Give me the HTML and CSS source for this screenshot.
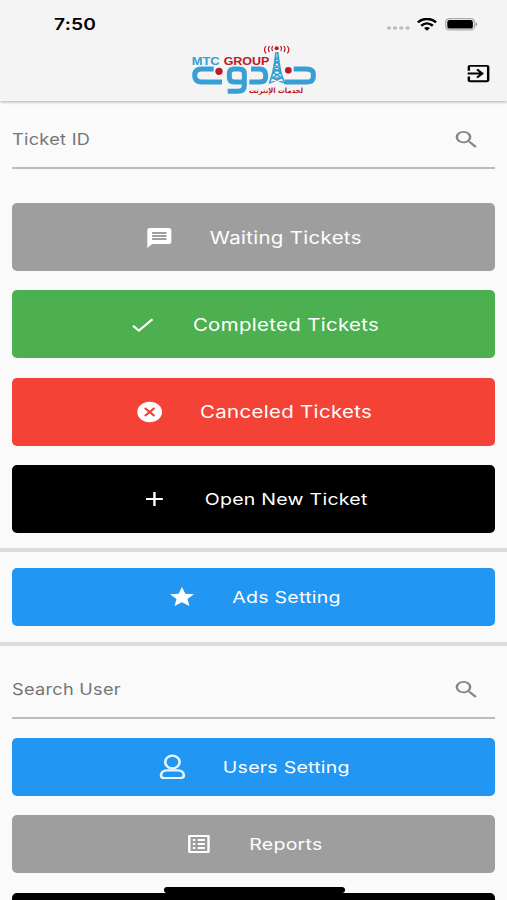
FILE: index.html
```html
<!DOCTYPE html>
<html lang="en">
<head>
<meta charset="utf-8">
<title>MTC Group</title>
<link rel="stylesheet" href="styles.css">
</head>
<body>
<div class="screen">
  <header class="header">
    <div class="status">
      <span class="time">7:50</span>
      <div class="indicators">
        <svg class="signal" width="24" height="6" viewBox="0 0 24 6" fill="#bdbdbd"><ellipse cx="3" cy="3" rx="2.2" ry="1.8"/><ellipse cx="9" cy="3" rx="2.2" ry="1.8"/><ellipse cx="15.3" cy="3" rx="2.2" ry="1.8"/><ellipse cx="21.6" cy="3" rx="2.2" ry="1.8"/></svg>
        <svg class="wifi" width="20" height="13" viewBox="0 0 20 13" fill="none" stroke="#000" stroke-width="2.5"><path d="M.9 4.4C6-.2 14-.2 19.1 4.4"/><path d="M4.2 7.7c3.5-3 8.100-3 11.600 0"/><path d="M7 10c1.800-1.400 4.200-1.400 6 0L10 12.700z" fill="#000" stroke="none"/></svg>
        <svg class="battery" width="33" height="13" viewBox="0 0 33 13"><rect x=".7" y=".7" width="28.800" height="11.200" rx="3.600" fill="#f4f4f4" stroke="#aaa" stroke-width="1.300"/><rect x="2.300" y="2" width="25.600" height="8.600" rx="2.200"/><path d="M30.700 4.300c2 .6 2 3.600 0 4.200z" fill="#999"/></svg>
      </div>
    </div>
    <div class="toolbar">
      <svg class="logo" width="128" height="52" viewBox="30 24 384 156" role="img" aria-label="MTC Group">
        <g fill="none" stroke="#389fd5" stroke-width="15">
          <path d="M101 99H65Q44 99 44 118.500T65 138H126"/>
          <path d="M192 138H162Q148 138 148 124V112Q148 99 162 99H178Q193 99 193 113V148Q193 166 174 166H143"/>
          <path d="M213 99H238Q257 99 257 118V123Q257 138 239 138H208"/>
          <path d="M341 99H379Q400 99 400 114V122Q400 138 379 138H314"/>
        </g>
        <g fill="none" stroke="#389fd5" stroke-width="4">
          <path stroke-width="5" d="M288 48 284 80 278 112 268 143M293 48 297 80 303 112 314 143"/>
          <path d="M286 62 296 74 283 86 299 98 280 110 306 126 272 140M295 62 285 74 298 86 282 98 302 110 276 126 310 140M284 80H298M280 104H302M275 126H307"/>
        </g>
        <g fill="#bd1928"><circle cx="117" cy="106" r="11"/><circle cx="325" cy="103" r="10"/><circle cx="290" cy="37" r="6"/></g>
        <g fill="none" stroke="#bd1928" stroke-width="3.500"><path d="M278 30Q273 38 278 45M268 30Q262 39 268 48M258 30Q249 41 258 52M302 30Q307 38 302 45M312 30Q318 39 312 48M322 30Q331 41 322 52"/></g>
        <text class="logo-name logo-blue" x="35" y="86" textLength="84" lengthAdjust="spacingAndGlyphs">MTC</text>
        <text class="logo-name logo-red" x="131" y="86" textLength="137" lengthAdjust="spacingAndGlyphs">GROUP</text>
        <text class="logo-sub logo-red" x="288" y="170" text-anchor="middle" textLength="162" lengthAdjust="spacingAndGlyphs" direction="rtl">لخدمات الإنترنت</text>
      </svg>
      <svg class="exit" width="29" height="23" viewBox="0 0 24 24" preserveAspectRatio="none"><path d="M10.090 15.590 11.500 17l5-5-5-5-1.410 1.410L12.670 11H3v2h9.670l-2.580 2.590zM19 3H5c-1.110 0-2 .9-2 2v4h2V5h14v14H5v-4H3v4c0 1.100.89 2 2 2h14c1.100 0 2-.9 2-2V5c0-1.100-.9-2-2-2z"/></svg>
    </div>
  </header>

  <main class="content">
    <div class="field">
      <span class="hint">Ticket ID</span>
      <svg class="search" viewBox="0 0 24 24" preserveAspectRatio="none"><path d="M15.500 14h-.79l-.28-.27A6.470 6.470 0 0 0 16 9.500 6.500 6.500 0 1 0 9.500 16c1.610 0 3.090-.59 4.230-1.570l.27.28v.79l5 4.990L20.490 19l-4.990-5zm-6 0a4.500 4.500 0 1 1 0-9 4.500 4.500 0 0 1 0 9z"/></svg>
    </div>

    <section class="group tickets">
      <div class="button gray"><div class="inner large"><svg viewBox="0 0 24 24"><path d="M20 2H4c-1.100 0-1.990.9-1.990 2L2 22l4-4h14c1.100 0 2-.9 2-2V4c0-1.100-.9-2-2-2zm-2 12H6v-2h12v2zm0-3H6V9h12v2zm0-3H6V6h12v2z"/></svg><span>Waiting Tickets</span></div></div>
      <div class="button green"><div class="inner large"><svg viewBox="0 0 24 24"><path d="M9 16.170 4.830 12l-1.420 1.410L9 19 21 7l-1.410-1.410z"/></svg><span>Completed Tickets</span></div></div>
      <div class="button red"><div class="inner large"><svg viewBox="0 0 24 24"><circle cx="12" cy="12" r="10.300"/><path d="M8 8l8 8M16 8l-8 8" stroke="#f44336" stroke-width="1.900"/></svg><span>Canceled Tickets</span></div></div>
      <div class="button black"><div class="inner"><svg viewBox="0 0 24 24"><path d="M19 13h-6v6h-2v-6H5v-2h6V5h2v6h6z"/></svg><span>Open New Ticket</span></div></div>
    </section>

    <section class="group ads">
      <div class="button blue short"><div class="inner"><svg viewBox="0 0 24 24"><path d="M12 17.270 18.180 21l-1.640-7.030L22 9.240l-7.190-.61L12 2 9.190 8.630 2 9.240l5.460 4.730L5.820 21z"/></svg><span>Ads Setting</span></div></div>
    </section>

    <div class="field user-field">
      <span class="hint">Search User</span>
      <svg class="search" viewBox="0 0 24 24" preserveAspectRatio="none"><path d="M15.500 14h-.79l-.28-.27A6.470 6.470 0 0 0 16 9.500 6.500 6.500 0 1 0 9.500 16c1.610 0 3.090-.59 4.230-1.570l.27.28v.79l5 4.990L20.490 19l-4.990-5zm-6 0a4.500 4.500 0 1 1 0-9 4.500 4.500 0 0 1 0 9z"/></svg>
    </div>

    <section class="group users">
      <div class="button blue short"><div class="inner"><svg viewBox="0 0 24 24"><g fill="none" stroke="#e4f7ff" stroke-width="2.200"><ellipse cx="12" cy="7" rx="6" ry="6.300"/><path d="M7.500 15.300h9c3 0 5 2.200 5 5.200q0 2.500-2.500 2.500H5q-2.500 0-2.500-2.500c0-3 2-5.200 5-5.200z"/></g></svg><span>Users Setting</span></div></div>
      <div class="button gray short"><div class="inner"><svg viewBox="0 0 24 24"><path d="M19 5v14H5V5h14m1.100-2H3.900c-.5 0-.9.400-.9.900v16.200c0 .4.400.9.900.9h16.200c.4 0 .9-.5.900-.9V3.900c0-.5-.5-.9-.9-.9zM11 7h6v2h-6V7zm0 4h6v2h-6v-2zm0 4h6v2h-6zM7 7h2v2H7zm0 4h2v2H7zm0 4h2v2H7z"/></svg><span>Reports</span></div></div>
      <div class="button black short"></div>
    </section>
  </main>
  <div class="home-indicator"></div>
</div>
</body>
</html>
```
FILE: styles.css
```css
* { box-sizing: border-box; }
body { margin: 0; background: #fafafa; font-family: Inter, "Liberation Sans", sans-serif; }
svg { display: block; flex: none; }
.screen { position: relative; width: 507px; height: 900px; overflow: hidden; background: #fafafa; }
.header { height: 101px; background: #f4f4f4; box-shadow: 0 1px 3px rgba(0, 0, 0, .3); }
.status { height: 44px; padding: 4px 29px 0 54px; display: flex; justify-content: space-between; align-items: center; }
.time { font-size: 16px; font-weight: 600; transform: scaleX(1.2); transform-origin: left; letter-spacing: .2px; }
.indicators { display: flex; align-items: center; }
.signal { margin: 8px 7px 0 0; }
.wifi { margin-right: 8px; }
.toolbar { height: 52px; display: grid; grid-template-columns: 190px 1fr 29px; padding-right: 14px; }
.logo { grid-column: 2; }
.exit { grid-column: 3; margin-top: 18px; }
.logo-name { font: 700 31px "Liberation Sans", sans-serif; stroke-width: .2px; }
.logo-sub { font: 700 22px "DejaVu Sans", sans-serif; }
.logo-blue { fill: #389fd5; stroke: #389fd5; }
.logo-red { fill: #bd1928; }
.logo-name.logo-red { stroke: #bd1928; }
.content { padding: 9px 12px 0 12.4px; }
.field { height: 59px; border-bottom: 2px solid #bcbcbc; display: flex; align-items: center; justify-content: space-between; padding: 2px 14px 0 0; }
.hint { font-size: 15.500px; color: #757575; letter-spacing: .25px; transform: scaleX(1.17); transform-origin: left; }
.search { width: 29px; height: 23px; fill: #858585; }
.group { display: flex; flex-direction: column; gap: 19.400px; }
.tickets { margin-top: 34px; }
.button { height: 68px; border-radius: 5px; display: flex; align-items: center; justify-content: center; color: #fff; flex: none; }
.short { height: 58px; }
.gray { background: #9e9e9e; }
.green { background: #4caf50; }
.red { background: #f44336; }
.black { background: #000; }
.blue { background: #2196f3; }
.inner { display: flex; align-items: center; gap: 30px; transform: scaleX(1.2); font-size: 16.300px; line-height: 24px; letter-spacing: .2px; white-space: nowrap; }
.inner.large { font-size: 17px; letter-spacing: .28px; padding-top: 1px; }
.inner svg { width: 24px; height: 24px; fill: #fff; overflow: visible; }
.ads { margin: 14.800px -12px 0 -12.400px; padding: 16px 12px 16px 12.400px; border-top: 4px solid #dcdcdc; border-bottom: 4px solid #dcdcdc; }
.user-field { margin-top: 14px; }
.users { margin-top: 19px; }
.home-indicator { position: absolute; left: 164px; top: 887px; width: 181px; height: 6px; border-radius: 3px; background: #000; }
```
